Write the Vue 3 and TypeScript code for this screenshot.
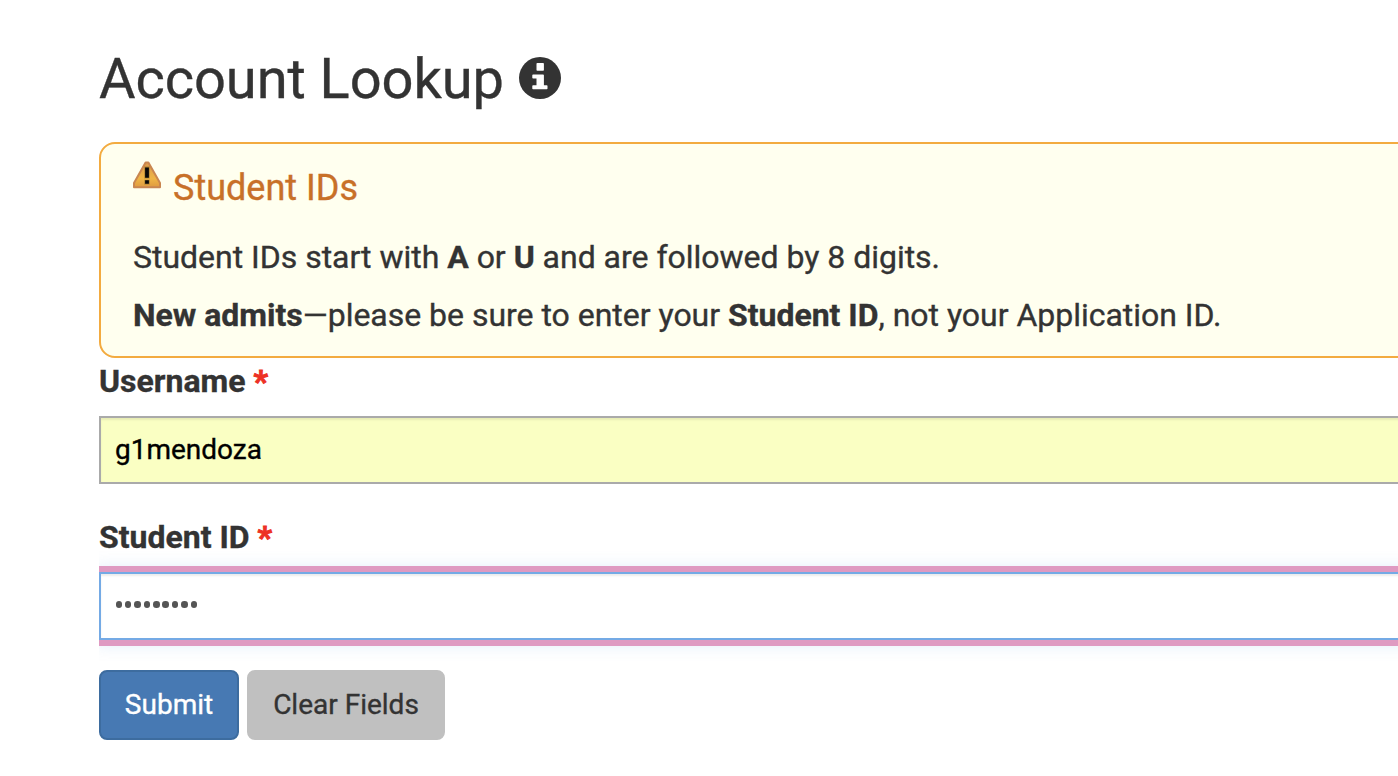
<script setup lang="ts">
import { ref } from 'vue'

const username = ref<string>('g1mendoza')
const maskLength = ref<number>(9)

function clearFields(): void {
  username.value = ''
  maskLength.value = 0
}
</script>

<template>
  <main class="page">
    <h1 class="title">
      <span class="title-text">Account Lookup</span>
      <svg class="info" viewBox="0 0 42 42" aria-hidden="true">
        <circle cx="21" cy="21" r="21" fill="#333" />
        <path
          fill="#fff"
          d="M18.300 6h5.800q.8 0 .8.8v6.200q0 .8-.8.8h-5.800q-.8 0-.8-.8V6.800q0-.8.8-.8zM14.100 17.500h10q.8 0 .8.8v9.900h2.800q.8 0 .8.8v2.500q0 .8-.8.8H14.100q-.8 0-.8-.8V29q0-.8.8-.8h3.400v-6.700h-3.400q-.8 0-.8-.8v-2.400q0-.8.8-.8z"
        />
      </svg>
    </h1>

    <section class="alert">
      <h2 class="alert-title">
        <svg class="warn" viewBox="0 0 28 28" aria-hidden="true">
          <defs>
            <linearGradient id="warn-fill" x1="0" y1="0" x2="0" y2="1">
              <stop offset="0" stop-color="#dc9a4c" />
              <stop offset=".65" stop-color="#efb545" />
              <stop offset="1" stop-color="#df9a40" />
            </linearGradient>
          </defs>
          <path
            d="M12.600 1.500h2.800L27 22v4.300H1V22z"
            fill="url(#warn-fill)"
            stroke="#c98650"
            stroke-width="2"
            stroke-linejoin="round"
          />
          <path d="M11.300 5.500h5.400v12h-5.400zM11.300 18.700h5.400v4.700h-5.400z" fill="#8a6a24" opacity=".6" />
          <path d="M12.100 6.500h3.800v10.200h-3.800zM12.100 19.300h3.800v3.500h-3.800z" fill="#080808" />
        </svg>
        <span class="alert-heading">Student IDs</span>
      </h2>
      <p class="line first"><span>Student IDs start with <b>A</b> or <b>U</b> and are followed by 8 digits.</span></p>
      <p class="line second"><span><b>New admits</b>—please be sure to enter your <b>Student ID</b>, not your Application ID.</span></p>
    </section>

    <form class="form" @submit.prevent>
      <label class="label" for="username">Username <span class="req">*</span></label>
      <input id="username" v-model="username" class="field filled" type="text" autocomplete="off" />

      <div class="label student">Student ID <span class="req">*</span></div>
      <div class="field focused" role="textbox" aria-label="Student ID">
        <i v-for="n in maskLength" :key="n" class="dot"></i>
      </div>

      <div class="actions">
        <button class="btn submit" type="submit">Submit</button>
        <button class="btn clear" type="button" @click="clearFields">Clear Fields</button>
      </div>
    </form>
  </main>
</template>

<style>
html,
body {
  overflow: hidden;
  background: #fff;
}
</style>

<style scoped>
.page {
  box-sizing: border-box;
  height: 776px;
  padding: 43px 0 0 99px;
  overflow: hidden;
  color: #333;
  font-family: Roboto, sans-serif;
  -webkit-text-stroke: 0.35px currentColor;
}
.title {
  display: flex;
  align-items: center;
  gap: 15px;
  height: 72px;
  margin: 0 0 27px;
  font-size: 56px;
  font-weight: 400;
  line-height: 72px;
  letter-spacing: -0.06px;
}
.info {
  width: 42px;
  height: 42px;
  margin-top: -2px;
}
.alert {
  box-sizing: border-box;
  width: 1400px;
  height: 216px;
  padding: 17px 32px 0;
  border: 2px solid #f3ab40;
  border-radius: 16px;
  background: #ffffef;
}
.alert-title {
  display: flex;
  align-items: flex-start;
  gap: 12px;
  height: 54px;
  margin: 0;
  color: #c87028;
  font-size: 36px;
  font-weight: 400;
  line-height: 54px;
}
.warn {
  width: 28px;
  height: 28px;
}
.line {
  height: 58px;
  margin: 0;
  font-size: 32px;
  line-height: 58px;
  letter-spacing: -0.018px;
  white-space: nowrap;
}
.first {
  margin-top: 13px;
}
.form {
  width: 1299px;
  height: 418px;
  overflow: hidden;
}
.label {
  display: block;
  height: 58px;
  font-size: 32px;
  font-weight: 700;
  line-height: 46px;
}
.student {
  margin-top: 30px;
}
.req {
  color: #ed3124;
  -webkit-text-stroke: 1px currentColor;
}
.field {
  display: flex;
  align-items: center;
  box-sizing: border-box;
  width: 1400px;
  height: 68px;
  padding: 0 14px 2px;
  border: 2px solid #aaa;
  border-radius: 0;
  color: #000;
  font-family: Roboto, sans-serif;
  font-size: 28px;
  outline: none;
}
.filled {
  background: #faffc3;
  box-shadow: inset 0 2px 2px rgba(0, 0, 0, 0.075);
}
.focused {
  gap: 2.9px;
  padding: 0 14.500px 3px;
  border-color: #74aae5;
  box-shadow:
    inset 0 2px 2px rgba(0, 0, 0, 0.075),
    0 0 0 6px #df9ac2,
    0 0 16px 4px rgba(102, 163, 233, 0.22);
}
.dot {
  width: 6.500px;
  height: 6.500px;
  border-radius: 50%;
  background: #555;
}
.actions {
  display: flex;
  gap: 8px;
  margin-top: 30px;
}
.btn {
  box-sizing: border-box;
  height: 70px;
  padding: 0;
  border: 2px solid #c0c0c0;
  border-radius: 8px;
  background: #c0c0c0;
  color: #333;
  font-family: Roboto, sans-serif;
  font-size: 28px;
  line-height: 66px;
}
.submit {
  width: 140px;
  border-color: #3d6c9f;
  background: #4779b3;
  color: #fff;
}
.clear {
  width: 198px;
}
</style>
